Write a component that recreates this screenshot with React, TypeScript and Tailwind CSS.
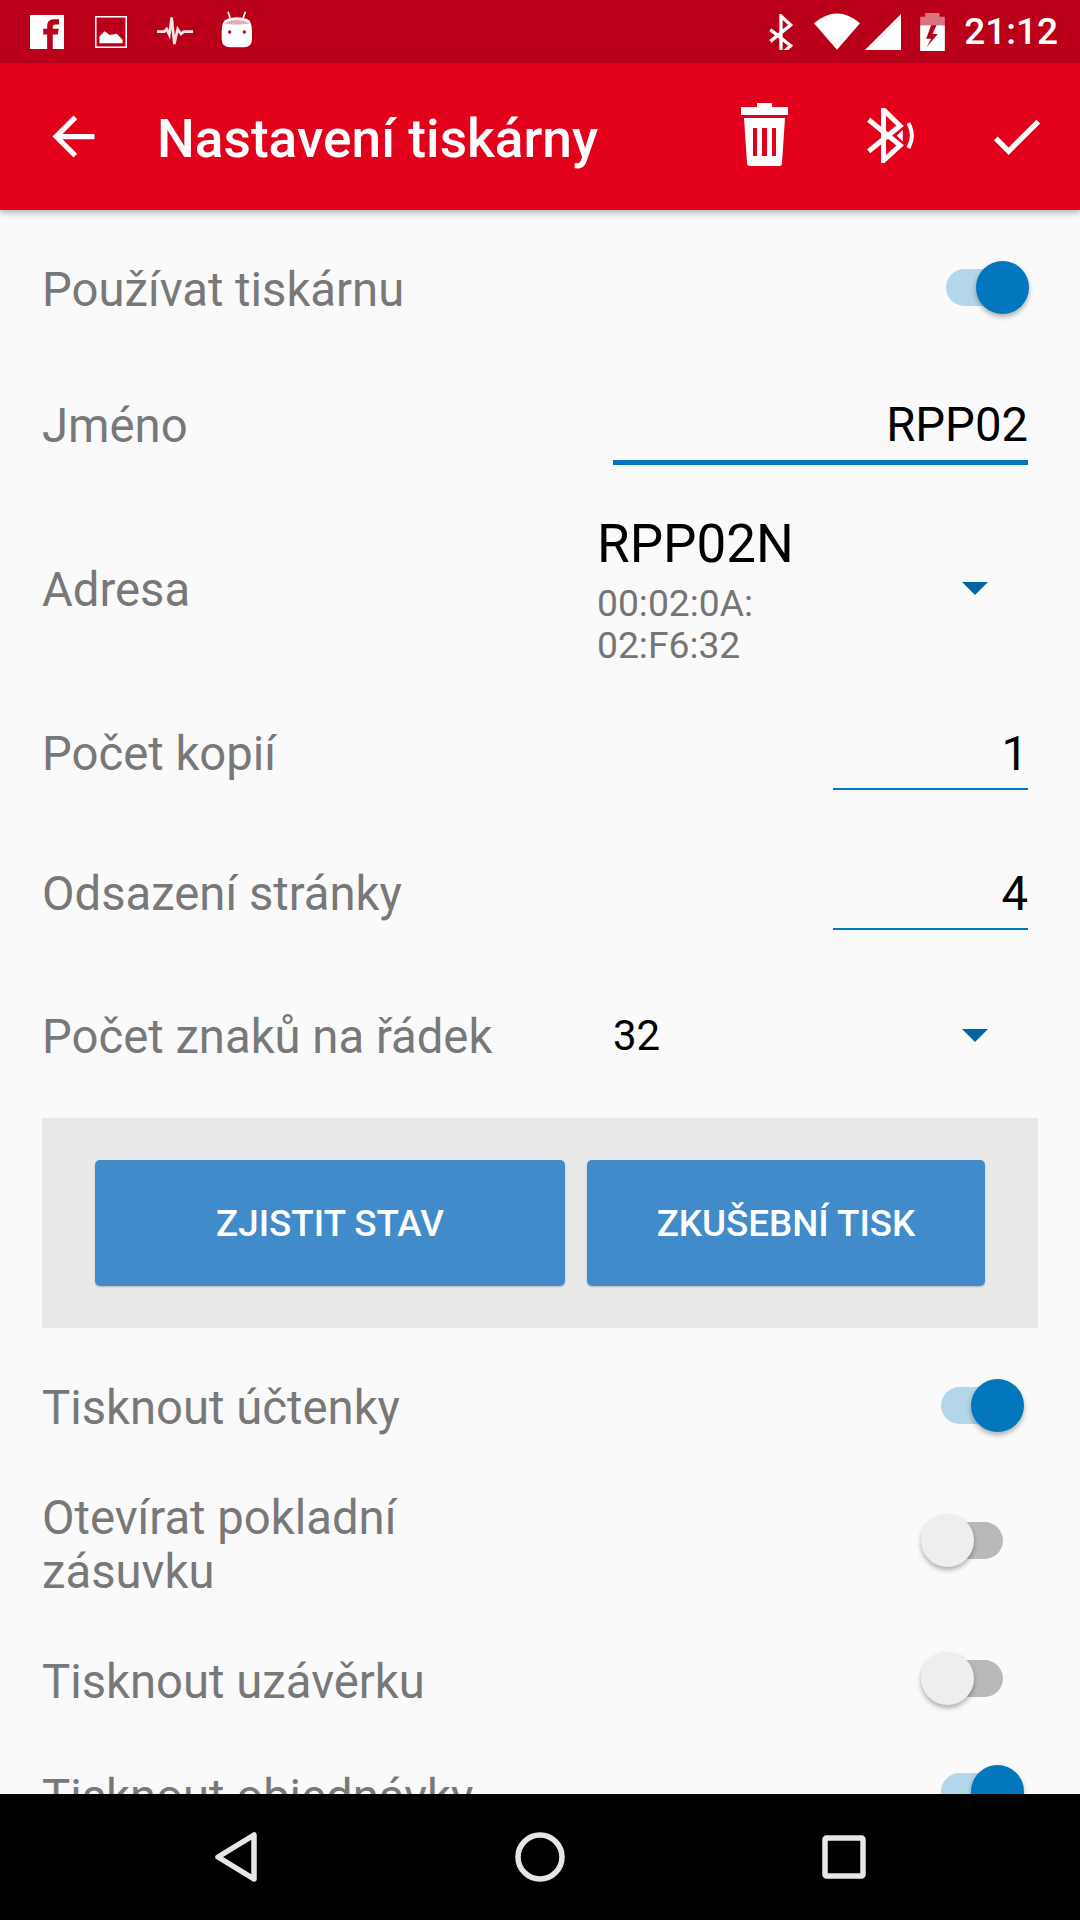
import React from 'react'

const labelClass = "text-[#787878] text-[47.25px] leading-[54px] font-['Roboto',sans-serif] mt-[2px]"

function Toggle({ on, offsetClass }: { on: boolean; offsetClass: string }) {
  return (
    <div className={`relative w-[83px] h-[53px] shrink-0 ${offsetClass}`}>
      <div
        className={`absolute top-[8px] h-[37px] rounded-full ${
          on ? 'left-0 w-[72px] bg-[#b3d6ea]' : 'left-[12px] w-[70px] bg-[#b9b9b9]'
        }`}
      />
      <div
        className={`absolute top-0 w-[53px] h-[53px] rounded-full shadow-[0_3px_5px_rgba(0,0,0,0.3)] ${
          on ? 'right-0 bg-[#0277bd]' : 'left-0 bg-[#eeeeee]'
        }`}
      />
    </div>
  )
}

function NumberField({ value }: { value: string }) {
  return (
    <div className="w-[195px] h-[60px] border-b-2 border-[#0277bd] text-right text-black text-[47.25px] leading-[48px] -mb-[14px]">
      {value}
    </div>
  )
}

function DropArrow({ className }: { className?: string }) {
  return (
    <svg width="26" height="13" viewBox="0 0 26 13" className={`shrink-0 ${className ?? ''}`}>
      <path d="M0 0H26L13 13z" fill="#01659f" />
    </svg>
  )
}

function StatusBar() {
  return (
    <div className="h-[63px] bg-[#b90018] flex items-center pl-[30px] pr-[22px] shrink-0">
      {/* facebook */}
      <svg width="34" height="34" viewBox="90 43 103 103" className="shrink-0">
        <path
          fillRule="evenodd"
          fill="white"
          d="M90 43H193V146H90zM142 146V102H130V85H142V76Q142 56 162 56H178V72H168Q159 72 159 80V85H177L174 102H159V146z"
        />
      </svg>
      {/* gallery */}
      <svg width="32" height="32" viewBox="284 48 94 94" className="ml-[31px] shrink-0">
        <rect x="286" y="50" width="90" height="90" fill="none" stroke="white" strokeWidth="5" />
        <path d="M297 128V108L312 93L328 104L348 100L365 118V128z" fill="white" />
      </svg>
      {/* pulse */}
      <svg width="38" height="34" viewBox="465 48 114 102" className="ml-[29px] shrink-0">
        <path
          d="M468 98H490L497 90L505 108L512 55L520 135L530 90L540 105L548 98H576"
          fill="none"
          stroke="white"
          strokeWidth="8"
          opacity="0.9"
        />
      </svg>
      {/* android head */}
      <svg width="32" height="37" viewBox="662 31 96 111" className="ml-[27px] -mt-[5px] shrink-0">
        <path d="M683 33L690 54M735 33L728 54" stroke="white" strokeWidth="5" />
        <path
          d="M664 90Q664 62 680 55Q710 45 740 55Q755 62 755 90V115Q755 140 730 140H690Q664 140 664 115z"
          fill="white"
        />
        <path d="M670 68Q710 46 750 68Q710 76 670 68z" fill="#e8a9b3" />
        <circle cx="688" cy="94" r="5" fill="#b90018" />
        <circle cx="732" cy="94" r="5" fill="#b90018" />
      </svg>

      {/* bluetooth */}
      <svg width="24" height="36" viewBox="445 325 72 108" className="ml-auto shrink-0">
        <path
          d="M449 372L510 420L481 447V331L510 358L449 407"
          fill="none"
          stroke="white"
          strokeWidth="10"
        />
      </svg>
      {/* wifi */}
      <svg width="46" height="37" viewBox="278 38 138 110" className="ml-[21px] shrink-0">
        <path d="M278 68Q347 10 416 68L347 148z" fill="white" />
      </svg>
      {/* cell signal */}
      <svg width="36" height="36" viewBox="432 40 108 108" className="ml-[5px] shrink-0">
        <path d="M432 148L540 40V148z" fill="white" />
      </svg>
      {/* battery charging */}
      <svg width="25" height="38" viewBox="607 35 74 114" className="ml-[19px] shrink-0">
        <path d="M622 35H665V46H681V72H607V46H622z" fill="white" opacity="0.45" />
        <path
          fillRule="evenodd"
          fill="white"
          d="M607 72H681V149H607zM640 72L625 112H640L626 138L660 98H644L656 72z"
        />
      </svg>
      <span className="ml-[19px] text-white text-[37px] font-medium leading-none font-['Roboto',sans-serif]">
        21:12
      </span>
    </div>
  )
}

function AppBar() {
  return (
    <div className="relative z-10 h-[147px] bg-[#e2001a] flex items-center shrink-0 shadow-[0_3px_6px_rgba(0,0,0,0.28)]">
      <svg width="63" height="63" viewBox="0 0 24 24" className="ml-[42px] shrink-0">
        <path d="M20 11H7.83l5.59-5.59L12 4l-8 8 8 8 1.41-1.41L7.83 13H20v-2z" fill="white" />
      </svg>
      <h1 className="ml-[52px] mt-[7px] text-white text-[53.25px] font-medium leading-none font-['Roboto',sans-serif]">
        Nastavení tiskárny
      </h1>
      <svg width="47" height="63" viewBox="0 0 47 63" className="ml-auto -mt-[4px] shrink-0">
        <path
          fill="white"
          fillRule="evenodd"
          d="M16 0H31V4H47V12H0V4H16zM3 15H44L41 60Q41 63 38 63H9Q6 63 6 60zM12 25V53H16V25zM21 25V53H26V25zM31 25V53H35V25z"
        />
      </svg>
      {/* bluetooth with signal arc */}
      <svg width="48" height="55" viewBox="440 325 145 165" className="ml-[79px] -mt-[2px] shrink-0">
        <path
          d="M445 360L540 437L490 483V330L540 378L445 455"
          fill="none"
          stroke="white"
          strokeWidth="15"
        />
        <path d="M530 408L548 390V426z" fill="white" />
        <path d="M565 370Q586 408 565 445" fill="none" stroke="white" strokeWidth="12" />
      </svg>
      <svg width="63" height="63" viewBox="0 0 24 24" className="ml-[70px] mr-[32px] shrink-0">
        <path d="M9 16.17L4.83 12l-1.42 1.41L9 19 21 7l-1.41-1.41z" fill="white" />
      </svg>
    </div>
  )
}

function NavBar() {
  return (
    <div className="h-[126px] bg-black flex items-center pl-[215px] shrink-0">
      <svg width="42" height="50" viewBox="0 0 42 50">
        <path d="M39 3V47L3 25z" fill="none" stroke="#e6e6e6" strokeWidth="5.5" strokeLinejoin="round" />
      </svg>
      <svg width="50" height="50" viewBox="0 0 50 50" className="ml-[258px]">
        <circle cx="25" cy="25" r="22" fill="none" stroke="#e6e6e6" strokeWidth="5.5" />
      </svg>
      <svg width="44" height="44" viewBox="0 0 44 44" className="ml-[257px]">
        <rect x="3" y="3" width="38" height="38" rx="1.5" fill="none" stroke="#e6e6e6" strokeWidth="5.5" />
      </svg>
    </div>
  )
}

export default function App() {
  return (
    <div className="w-[1080px] h-[1920px] flex flex-col overflow-hidden bg-[#fafafa] font-['Roboto',sans-serif]">
      <StatusBar />
      <AppBar />

      <div className="flex-1 min-h-0 overflow-hidden pt-[14px] pl-[42px]">
        <div className="h-[130px] flex items-center justify-between">
          <span className={labelClass}>Používat tiskárnu</span>
          <Toggle on offsetClass="mr-[51px] -mt-[4px]" />
        </div>

        <div className="h-[142px] flex items-center justify-between">
          <span className={labelClass}>Jméno</span>
          <div className="w-[415px] mr-[52px] h-[70px] border-b-[5px] border-[#0277bd] text-right text-black text-[47.25px] leading-[60px] mt-[10px]">
            RPP02
          </div>
        </div>

        <div className="h-[186px] flex items-center">
          <span className={`${labelClass} w-[556px]`}>Adresa</span>
          <div className="w-[365px] -ml-[1px]">
            <div className="text-black text-[53px] leading-[62px]">RPP02N</div>
            <div className="text-[#757575] text-[37.25px] leading-[42px] w-[200px] mt-[7px]">00:02:0A: 02:F6:32</div>
          </div>
          <DropArrow className="-mt-[2px]" />
        </div>

        <div className="h-[142px] flex items-center justify-between">
          <span className={labelClass}>Počet kopií</span>
          <div className="mr-[52px]">
            <NumberField value="1" />
          </div>
        </div>

        <div className="h-[138px] flex items-center justify-between">
          <span className={labelClass}>Odsazení stránky</span>
          <div className="mr-[52px]">
            <NumberField value="4" />
          </div>
        </div>

        <div className="h-[148px] flex items-center">
          <span className={`${labelClass} w-[571px]`}>Počet znaků na řádek</span>
          <span className="w-[349px] text-black text-[42px] leading-[54px]">32</span>
          <DropArrow className="-mt-[2px]" />
        </div>

        <div className="mt-[8px] w-[996px] h-[210px] bg-[#e8e8e8] flex items-center pl-[53px] gap-[22px]">
          <button className="w-[470px] h-[126px] rounded-[5px] pt-[2px] bg-[#428bca] text-white text-[36.75px] font-medium shadow-[0_1px_2px_rgba(0,0,0,0.2)]">
            ZJISTIT STAV
          </button>
          <button className="w-[398px] h-[126px] rounded-[5px] pt-[2px] bg-[#428bca] text-white text-[36.75px] font-medium shadow-[0_1px_2px_rgba(0,0,0,0.2)]">
            ZKUŠEBNÍ TISK
          </button>
        </div>

        <div className="h-[158px] flex items-center justify-between">
          <span className={labelClass}>Tisknout účtenky</span>
          <Toggle on offsetClass="mr-[56px] -mt-[4px]" />
        </div>

        <div className="h-[110px] flex items-center justify-between">
          <span className={`${labelClass} w-[450px] pt-[5px]`}>Otevírat pokladní zásuvku</span>
          <Toggle on={false} offsetClass="mr-[76px] -mt-[1px]" />
        </div>

        <div className="h-[170px] flex items-center justify-between">
          <span className={labelClass}>Tisknout uzávěrku</span>
          <Toggle on={false} offsetClass="mr-[76px] -mt-[6px]" />
        </div>

        <div className="h-[60px] flex items-center justify-between">
          <span className={labelClass}>Tisknout objednávky</span>
          <Toggle on offsetClass="mr-[56px] -mt-[10px]" />
        </div>
      </div>

      <NavBar />
    </div>
  )
}
